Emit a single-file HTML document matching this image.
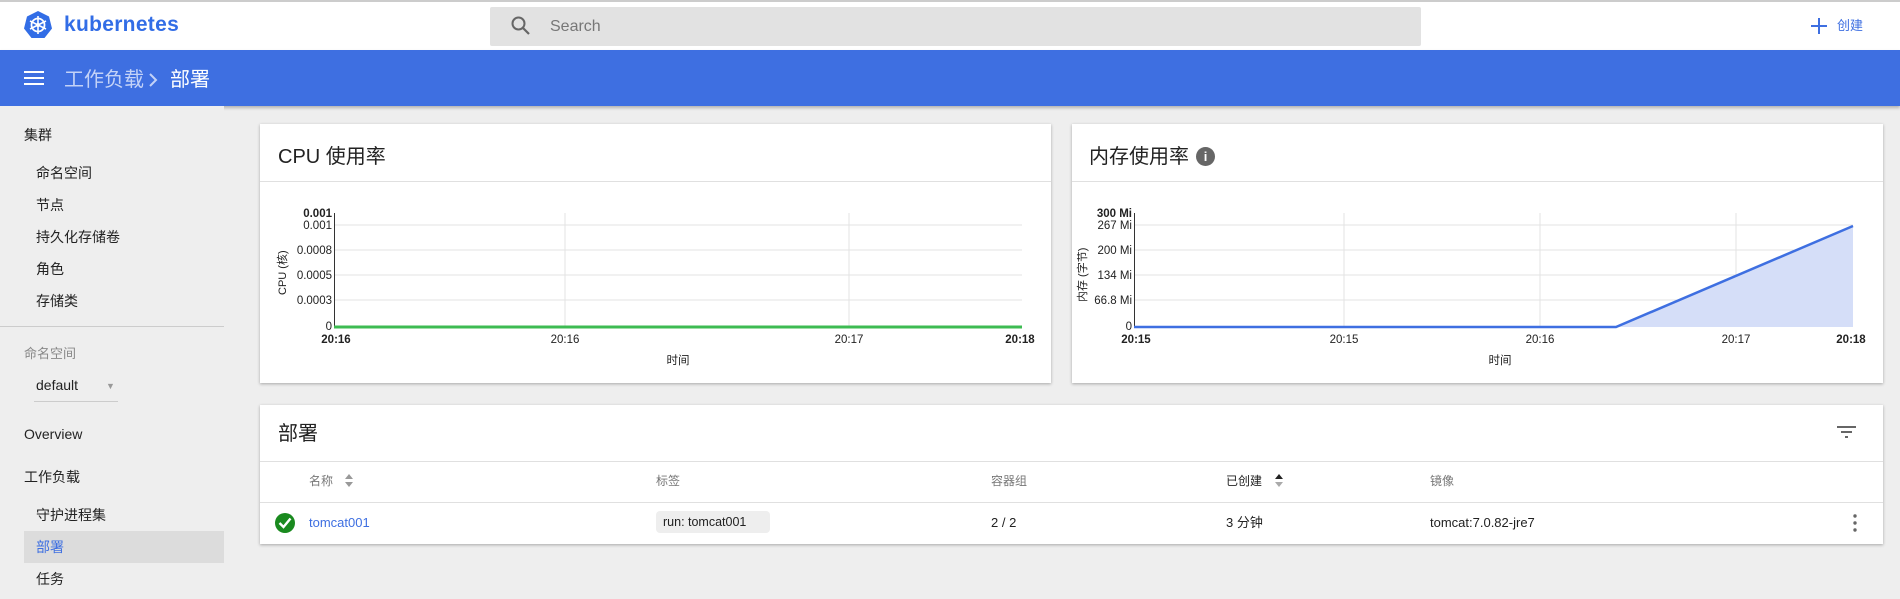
<!DOCTYPE html>
<html><head><meta charset="utf-8"><style>
*{margin:0;padding:0;box-sizing:border-box}
body{width:1900px;height:599px;overflow:hidden;background:#eeeeee;font-family:"Liberation Sans","Noto Sans CJK SC",sans-serif;position:relative;color:#333}
.a{position:absolute;white-space:nowrap;line-height:1.2}
.top{left:0;top:0;width:1900px;height:50px;background:#fff;border-top:2px solid #ccc}
.blue{left:0;top:50px;width:1900px;height:56px;background:#3e6fe1;box-shadow:0 2px 3px rgba(0,0,0,.25)}
.search{left:490px;top:7px;width:931px;height:39px;background:#e2e2e2;border-radius:2px}
.card{background:#fff;box-shadow:0 1px 3px rgba(0,0,0,.3)}
.sb{font-size:14px;color:#222}
.hd{font-size:12px;color:#777;line-height:16px}
.cell{font-size:13px;color:#222;line-height:16px}
</style></head><body>
<div class="a top"></div>
<svg class="a" style="left:23px;top:10px" width="30" height="30" viewBox="0 0 30 30"><polygon points="15,1 26,6.5 29,18.5 21.5,28 8.5,28 1,18.5 4,6.5" fill="#326de6"/><circle cx="15" cy="15" r="6.5" fill="none" stroke="#fff" stroke-width="1.8"/><g stroke="#fff" stroke-width="1.6"><line x1="15" y1="6" x2="15" y2="24"/><line x1="7" y1="11" x2="23" y2="19"/><line x1="7" y1="19" x2="23" y2="11"/></g><circle cx="15" cy="15" r="2" fill="#fff"/></svg>
<div class="a" style="left:64px;top:12px;font-size:21px;font-weight:bold;color:#326de6;letter-spacing:.3px">kubernetes</div>
<div class="a search"></div>
<svg class="a" style="left:510px;top:15px" width="22" height="22" viewBox="0 0 22 22"><circle cx="8.5" cy="8.5" r="6" fill="none" stroke="#666" stroke-width="2"/><line x1="13" y1="13" x2="19" y2="19" stroke="#666" stroke-width="2.2"/></svg>
<div class="a" style="left:550px;top:17px;font-size:16px;color:#777">Search</div>
<svg class="a" style="left:1811px;top:18px" width="16" height="16"><g fill="#3e6fe1"><rect x="7" y="0" width="2" height="16"/><rect x="0" y="7" width="16" height="2"/></g></svg>
<div class="a" style="left:1837px;top:18px;font-size:13px;color:#3e6fe1">创建</div>
<div class="a blue"></div>
<svg class="a" style="left:24px;top:70px" width="20" height="16"><g fill="#fff"><rect y="1" width="20" height="2"/><rect y="7" width="20" height="2"/><rect y="13" width="20" height="2"/></g></svg>
<div class="a" style="left:64px;top:68px;font-size:20px;color:#c3d2f7">工作负载</div>
<svg class="a" style="left:148px;top:72px" width="10" height="16"><polyline points="2,2 8,8 2,14" fill="none" stroke="#c3d2f7" stroke-width="2"/></svg>
<div class="a" style="left:170px;top:68px;font-size:20px;color:#fff">部署</div>
<div class="a" style="left:0;top:106px;width:224px;height:493px;background:#eeeeee"></div>
<div class="a sb" style="left:24px;top:127px">集群</div>
<div class="a sb" style="left:36px;top:165px">命名空间</div>
<div class="a sb" style="left:36px;top:197px">节点</div>
<div class="a sb" style="left:36px;top:229px">持久化存储卷</div>
<div class="a sb" style="left:36px;top:261px">角色</div>
<div class="a sb" style="left:36px;top:293px">存储类</div>
<div class="a" style="left:0;top:326px;width:224px;height:1px;background:#ccc"></div>
<div class="a" style="left:24px;top:346px;font-size:13px;color:#888">命名空间</div>
<div class="a sb" style="left:36px;top:377px">default</div>
<div class="a" style="left:106px;top:381px;font-size:9px;color:#999">▼</div>
<div class="a" style="left:34px;top:401px;width:84px;height:1px;background:#ccc"></div>
<div class="a sb" style="left:24px;top:426px">Overview</div>
<div class="a sb" style="left:24px;top:469px">工作负载</div>
<div class="a sb" style="left:36px;top:507px">守护进程集</div>
<div class="a" style="left:24px;top:531px;width:200px;height:32px;background:#dcdcdc"></div>
<div class="a sb" style="left:36px;top:539px;color:#3e6fe1">部署</div>
<div class="a sb" style="left:36px;top:571px">任务</div>

<div class="a card" style="left:260px;top:124px;width:791px;height:259px"></div>
<div class="a card" style="left:1072px;top:124px;width:811px;height:259px"></div>
<div class="a card" style="left:260px;top:405px;width:1623px;height:139px"></div>
<div class="a" style="left:278px;top:145px;font-size:20px;color:#222">CPU 使用率</div>
<div class="a" style="left:1089px;top:145px;font-size:20px;color:#222">内存使用率</div>
<div class="a" style="left:1196px;top:147px;width:19px;height:19px;border-radius:50%;background:#666;color:#fff;font-size:13px;font-weight:bold;text-align:center;line-height:19px">i</div>
<div class="a" style="left:278px;top:422px;font-size:20px;color:#222">部署</div>

<svg class="a" style="left:0;top:0" width="1900" height="599" font-family="Liberation Sans, Noto Sans CJK SC, sans-serif">
<g fill="#e0e0e0"><rect x="260" y="181" width="791" height="1"/><rect x="1072" y="181" width="811" height="1"/><rect x="260" y="461" width="1623" height="1"/><rect x="260" y="502" width="1623" height="1"/></g>
<g stroke="#e3e3e3" stroke-width="1"><line x1="334" y1="225" x2="1022" y2="225"/><line x1="334" y1="250" x2="1022" y2="250"/><line x1="334" y1="275" x2="1022" y2="275"/><line x1="334" y1="300" x2="1022" y2="300"/><line x1="565" y1="213" x2="565" y2="327"/><line x1="849" y1="213" x2="849" y2="327"/></g>
<line x1="334.5" y1="213" x2="334.5" y2="328" stroke="#333"/>
<line x1="334" y1="327" x2="1022" y2="327" stroke="#3dbb52" stroke-width="3"/>
<g font-size="11.5" fill="#222" text-anchor="end"><text x="332" y="217" font-weight="bold">0.001</text><text x="332" y="229">0.001</text><text x="332" y="254">0.0008</text><text x="332" y="279">0.0005</text><text x="332" y="304">0.0003</text><text x="332" y="330">0</text></g>
<g font-size="11.5" fill="#222" text-anchor="middle"><text x="336" y="343" font-weight="bold">20:16</text><text x="565" y="343">20:16</text><text x="849" y="343">20:17</text><text x="1020" y="343" font-weight="bold">20:18</text><text x="678" y="364">时间</text></g>
<text transform="translate(286,295) rotate(-90)" font-size="11" fill="#222">CPU (核)</text>
<g stroke="#e3e3e3" stroke-width="1"><line x1="1134" y1="225" x2="1853" y2="225"/><line x1="1134" y1="250" x2="1853" y2="250"/><line x1="1134" y1="275" x2="1853" y2="275"/><line x1="1134" y1="300" x2="1853" y2="300"/><line x1="1344" y1="213" x2="1344" y2="327"/><line x1="1540" y1="213" x2="1540" y2="327"/><line x1="1736" y1="213" x2="1736" y2="327"/></g>
<polygon points="1616,327 1853,226 1853,327" fill="#d5def8"/>
<line x1="1134.5" y1="213" x2="1134.5" y2="328" stroke="#333"/>
<polyline points="1134,327 1616,327 1853,226" fill="none" stroke="#3e6fe1" stroke-width="2.5"/>
<g font-size="11.5" fill="#222" text-anchor="end"><text x="1132" y="217" font-weight="bold">300 Mi</text><text x="1132" y="229">267 Mi</text><text x="1132" y="254">200 Mi</text><text x="1132" y="279">134 Mi</text><text x="1132" y="304">66.8 Mi</text><text x="1132" y="330">0</text></g>
<g font-size="11.5" fill="#222" text-anchor="middle"><text x="1136" y="343" font-weight="bold">20:15</text><text x="1344" y="343">20:15</text><text x="1540" y="343">20:16</text><text x="1736" y="343">20:17</text><text x="1851" y="343" font-weight="bold">20:18</text><text x="1500" y="364">时间</text></g>
<text transform="translate(1086,302) rotate(-90)" font-size="11" fill="#222">内存 (字节)</text>
<g fill="#666"><rect x="1837" y="426" width="19" height="2"/><rect x="1841" y="431" width="11" height="2"/><rect x="1845" y="436" width="3" height="2"/></g>
<g fill="#999"><polygon points="345,479 349,474 353,479"/><polygon points="345,482 349,487 353,482"/></g>
<g><polygon points="1275,479 1279,474 1283,479" fill="#222"/><polygon points="1275,482 1279,487 1283,482" fill="#aaa"/></g>
<circle cx="285" cy="523" r="10" fill="#1a8a1f"/><polyline points="279.5,523 283.5,527 290.5,518.5" fill="none" stroke="#fff" stroke-width="2.4"/>
<g fill="#666"><circle cx="1855" cy="516" r="1.7"/><circle cx="1855" cy="523" r="1.7"/><circle cx="1855" cy="530" r="1.7"/></g>
</svg>
<div class="a hd" style="left:309px;top:473px">名称</div>
<div class="a hd" style="left:656px;top:473px">标签</div>
<div class="a hd" style="left:991px;top:473px">容器组</div>
<div class="a hd" style="left:1226px;top:473px;color:#222">已创建</div>
<div class="a hd" style="left:1430px;top:473px">镜像</div>
<div class="a cell" style="left:309px;top:515px;color:#3e6fe1">tomcat001</div>
<div class="a" style="left:656px;top:511px;width:114px;height:22px;background:#eee;border-radius:4px;font-size:12.5px;color:#222;padding:4px 0 0 7px">run: tomcat001</div>
<div class="a cell" style="left:991px;top:515px">2 / 2</div>
<div class="a cell" style="left:1226px;top:515px">3 分钟</div>
<div class="a cell" style="left:1430px;top:515px">tomcat:7.0.82-jre7</div>
</body></html>
